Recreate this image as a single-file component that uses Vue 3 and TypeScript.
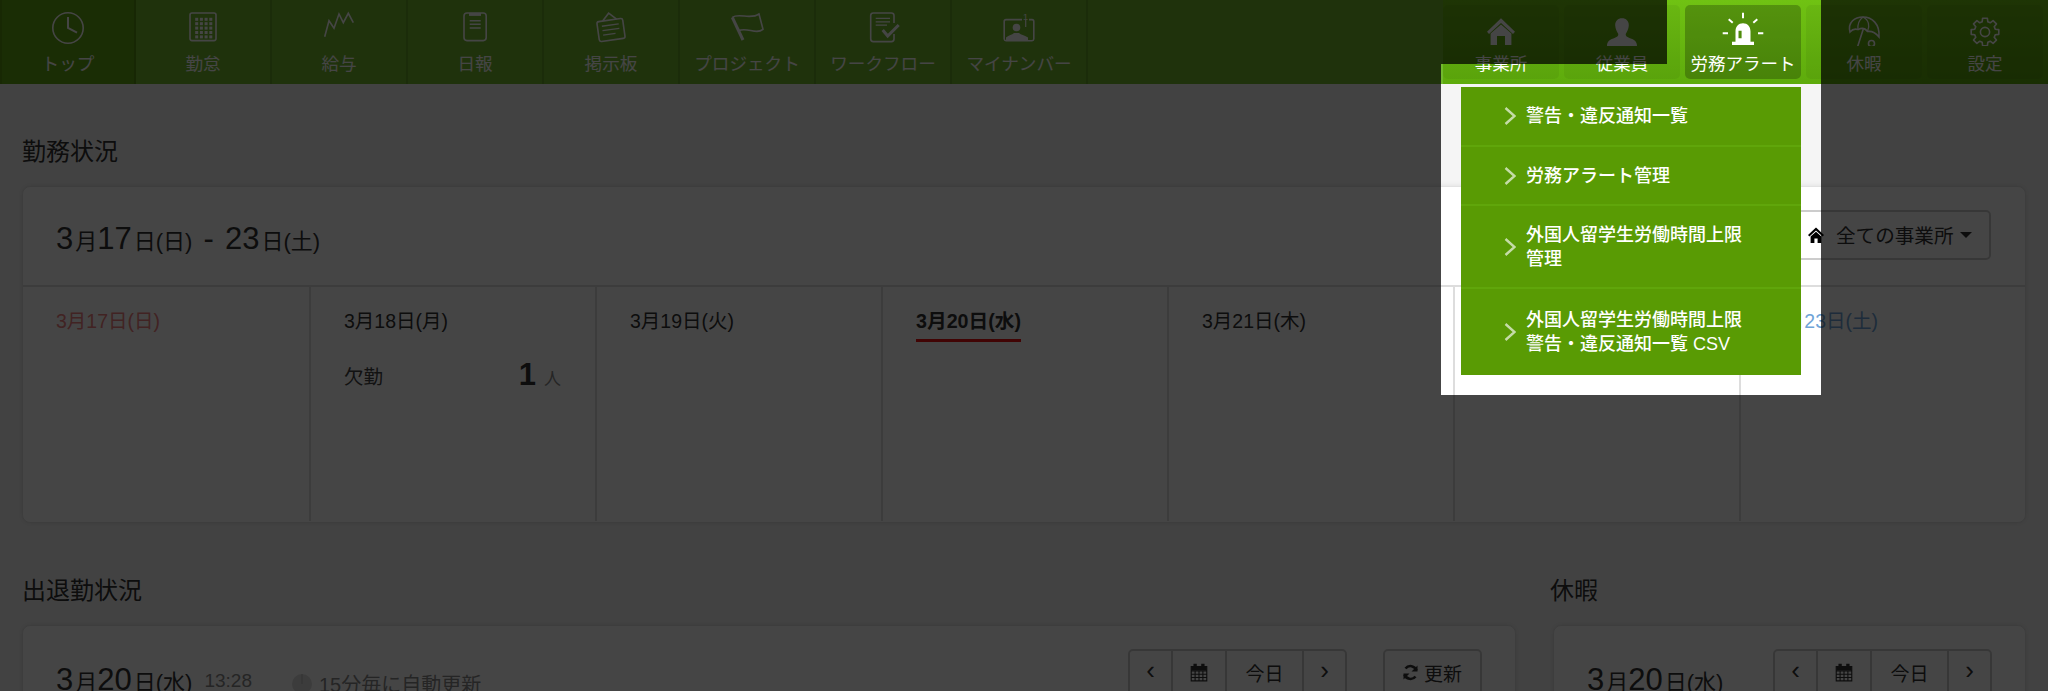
<script setup lang="ts">
interface NavItem { id: string; label: string }

const leftNav: NavItem[] = [
  { id: 'clock', label: 'トップ' },
  { id: 'grid', label: '勤怠' },
  { id: 'chart', label: '給与' },
  { id: 'report', label: '日報' },
  { id: 'board', label: '掲示板' },
  { id: 'flag', label: 'プロジェクト' },
  { id: 'flow', label: 'ワークフロー' },
  { id: 'mynumber', label: 'マイナンバー' },
]
const rightNav: NavItem[] = [
  { id: 'home', label: '事業所' },
  { id: 'user', label: '従業員' },
  { id: 'alarm', label: '労務アラート' },
  { id: 'umbrella', label: '休暇' },
  { id: 'gear', label: '設定' },
]
const menu: string[][] = [
  ['警告・違反通知一覧'],
  ['労務アラート管理'],
  ['外国人留学生労働時間上限', '管理'],
  ['外国人留学生労働時間上限', '警告・違反通知一覧 CSV'],
]
const days = [
  { label: '3月17日(日)', kind: 'sun' },
  { label: '3月18日(月)', kind: '', absent: 1 },
  { label: '3月19日(火)', kind: '' },
  { label: '3月20日(水)', kind: 'today' },
  { label: '3月21日(木)', kind: '' },
  { label: '3月22日(金)', kind: '' },
  { label: '3月23日(土)', kind: 'sat' },
]
const gridCells: { x: number; y: number }[] = []
for (let r = 0; r < 5; r++) for (let c = 0; c < 4; c++) gridCells.push({ x: 14.2 + c * 4.7, y: 7.8 + r * 4.4 })

function gearPath(): string {
  const cx = 22, cy = 22, n = 8, ro = 14, ri = 10.6
  const pts: string[] = []
  for (let i = 0; i < n; i++) {
    const a = (i * 2 * Math.PI) / n
    const steps: [number, number][] = [[-0.27, ri], [-0.17, ro], [0.17, ro], [0.27, ri]]
    for (const [d, r] of steps) {
      const t = a + d
      pts.push(`${(cx + r * Math.sin(t)).toFixed(2)} ${(cy - r * Math.cos(t)).toFixed(2)}`)
    }
  }
  return 'M' + pts.join('L') + 'Z'
}
const gear = gearPath()
</script>

<template>
  <div class="page">
    <header class="nav">
      <div class="nav-left">
        <a v-for="(n, i) in leftNav" :key="n.id" class="tab" :class="{ current: i === 0 }">
          <svg class="ico" viewBox="0 0 44 36">
            <g v-if="n.id === 'clock'" fill="none" stroke="#fff" stroke-width="1.6">
              <circle cx="22" cy="18" r="15.2" />
              <path d="M22 7V18L31 22.6" stroke-width="2" />
            </g>
            <g v-else-if="n.id === 'grid'">
              <rect x="9" y="3" width="26" height="27.6" rx="2" fill="none" stroke="#fff" stroke-width="1.6" />
              <rect v-for="(c, k) in gridCells" :key="k" :x="c.x" :y="c.y" width="3" height="3" fill="#fff" />
            </g>
            <path v-else-if="n.id === 'chart'" d="M7.7 26.7L12 10.7 17 18.3 22 4 26.3 12.7 31.3 3.3 36.3 12.7" fill="none" stroke="#fff" stroke-width="1.6" />
            <g v-else-if="n.id === 'report'" fill="none" stroke="#fff" stroke-width="1.6">
              <rect x="11" y="3" width="22.2" height="27.6" rx="3" />
              <path d="M16 4.4H28" stroke-width="3" />
              <path d="M16.7 10.7H27.7M16.7 14.2H27.7M16.7 18H27.7" />
            </g>
            <g v-else-if="n.id === 'board'" fill="none" stroke="#fff" stroke-width="1.6" transform="rotate(-8 22 20)">
              <rect x="9" y="10" width="26" height="20" rx="2" />
              <path d="M15 10L22 3 29 10" />
              <path d="M13.5 15H30.5M13.5 19.5H30.5M13.5 24H26" stroke-width="1.3" />
            </g>
            <g v-else-if="n.id === 'flag'" fill="none" stroke="#fff" stroke-width="1.6">
              <path d="M7.3 7.3L18 30" stroke-width="3" />
              <path d="M7.3 7.3C14 2.7 25.7 10 34 4L38 19.3C30.7 25 22.3 16.7 13.3 20.7" />
            </g>
            <g v-else-if="n.id === 'flow'" fill="none" stroke="#fff" stroke-width="1.6">
              <path d="M33 13V5.5A2.6 2.6 0 0 0 30.4 3H12.3A2.6 2.6 0 0 0 9.7 5.5V29A2.6 2.6 0 0 0 12.3 31.6H30.4A2.6 2.6 0 0 0 33 29V24" />
              <path d="M14.7 8.3H29M14.7 11.8H29M14.7 15.2H26" stroke-width="1.3" />
              <path d="M21.7 20L26.7 26 37.7 15" stroke-width="3" />
            </g>
            <g v-else-if="n.id === 'mynumber'">
              <path d="M25 9.6H9A1.8 1.8 0 0 0 7.2 11.4V29A1.8 1.8 0 0 0 9 30.7H35A1.8 1.8 0 0 0 36.8 29V11.4A1.8 1.8 0 0 0 35 9.6H32" fill="none" stroke="#fff" stroke-width="1.6" />
              <circle cx="19.5" cy="17.5" r="3.8" fill="#fff" />
              <path d="M9 30V27.5C12 25 15 25 17 23H22C24 25 27 25 31 27.5V30Z" fill="#fff" />
              <text x="28.4" y="10" fill="#fff" font-size="9" text-anchor="middle" class="one">1</text>
              <path d="M28.7 10V17" stroke="#fff" stroke-width="1.2" />
            </g>
          </svg>
          <span class="tab-label">{{ n.label }}</span>
        </a>
      </div>
      <div class="nav-right">
        <a v-for="n in rightNav" :key="n.id" class="pill" :class="{ open: n.id === 'alarm' }">
          <svg class="ico" viewBox="0 0 44 36">
            <g v-if="n.id === 'home'" fill="#fff">
              <path d="M22 8.3L8 21.8 10 24 22 13 34 24 36 21.8Z" />
              <path d="M11.6 23.5L22 14.6 32.4 23.5V35H26V26H18V35H11.6Z" />
            </g>
            <g v-else-if="n.id === 'user'" fill="#fff">
              <path d="M22 8.3C26 8.3 29 11 28.8 15.5 28.6 19 27 22 25.7 24 25.4 26 27 27 30 28.2 34 29.6 37 31 37 36H7C7 31 10 29.6 14 28.2 17 27 18.6 26 18.3 24 17 22 15.4 19 15.2 15.5 15 11 18 8.3 22 8.3Z" />
            </g>
            <g v-else-if="n.id === 'alarm'" fill="#fff">
              <path d="M11 31.7H33V35H11Z" />
              <path fill-rule="evenodd" d="M14.5 32V21.5C14.5 16.5 17.5 13.3 22 13.3 26.5 13.3 29.5 16.5 29.5 21.5V32ZM17.5 20.7V28.3H20.6V20.7Z" />
              <path d="M22 2.7V8.3M7.7 9.3L11.7 12.7M36.3 9.3L32.3 12.7M1.7 23.3H7M37 23.3H42.3" stroke="#fff" stroke-width="2" fill="none" />
            </g>
            <g v-else-if="n.id === 'umbrella'" fill="none" stroke="#fff" stroke-width="1.6">
              <path d="M8 22C5.5 12 13 7 21 7 30 7 38 14 37 27 33 22 29 21 25.5 21.5 23 18 19 18 16 19.6 13 18.6 10 19.6 8 22Z" />
              <path d="M21 7C17 10 15.5 15 16 19.6M21 7C27 10 28 16 25.5 21.5" stroke-width="1.3" />
              <path d="M21.3 19L15.5 37M7 37.5H37.5" />
              <circle cx="29.5" cy="33.5" r="3" />
            </g>
            <g v-else-if="n.id === 'gear'" fill="none" stroke="#fff" stroke-width="1.6">
              <path :d="gear" stroke-linejoin="round" />
              <circle cx="22" cy="22" r="4.6" />
            </g>
          </svg>
          <span class="tab-label right-label">{{ n.label }}</span>
          <ul v-if="n.id === 'alarm'" class="dropdown">
            <li v-for="(m, i) in menu" :key="i" class="drop-row" :class="'row' + i">
              <svg class="chev" viewBox="0 0 12 18"><path d="M1.5 1L10.5 9 1.5 17" fill="none" stroke="#fff" stroke-width="2.4" /></svg>
              <span class="drop-text"><span v-for="l in m" :key="l" class="drop-line">{{ l }}</span></span>
            </li>
          </ul>
        </a>
      </div>
    </header>

    <main class="content">
      <h2 class="sec-title">勤務状況</h2>
      <section class="card week">
        <div class="week-head">
          <div class="bigdate head-date"><b>3</b>月<b>17</b>日(日) <b class="dash">-</b> <b>23</b>日(土)</div>
          <button class="btn office">
            <svg width="16" height="16" viewBox="0 0 16 16"><path d="M8 0.5L0 8 1.4 9.4 8 3.4 14.6 9.4 16 8ZM2.6 9.6L8 4.8 13.4 9.6V16H9.6V11.5H6.4V16H2.6Z" fill="#000" /></svg>
            <span>全ての事業所</span>
            <i class="caret"></i>
          </button>
        </div>
        <div class="week-grid">
          <div v-for="d in days" :key="d.label" class="day">
            <span class="day-label" :class="d.kind">{{ d.label }}</span>
            <div v-if="d.absent" class="absent">
              <span>欠勤</span>
              <span class="count"><b>{{ d.absent }}</b><small>人</small></span>
            </div>
          </div>
        </div>
      </section>

      <div class="lower">
        <div>
          <h2 class="sec-title second">出退勤状況</h2>
          <section class="card low-card">
            <div class="bigdate"><b>3</b>月<b>20</b>日(水)</div>
            <span class="time">13:28</span>
            <span class="auto"><svg width="20" height="20" viewBox="0 0 20 20"><circle cx="10" cy="10" r="10" fill="#ddd" /><path d="M10 0V10" stroke="#bbb" /></svg>15分毎に自動更新</span>
            <div class="seg push">
              <span class="s1">‹</span>
              <span class="s2"><svg width="18" height="20" viewBox="0 0 16 18"><path d="M1 4H15V17H1Z M1 8H15M1 11H15M1 14H15M4.5 8V17M8 8V17M11.5 8V17" fill="none" stroke="#333" /><path d="M3 1.5H6V6H3ZM10 1.5H13V6H10ZM1 3.5H15V7.5H1Z" fill="#333" /></svg></span>
              <span class="s3">今日</span>
              <span class="s4">›</span>
            </div>
            <button class="btn refresh">
              <svg width="17" height="17" viewBox="0 0 17 17"><path d="M14.5 6.5A6.3 6.3 0 0 0 3.5 4.5M2.5 10.5A6.3 6.3 0 0 0 13.5 12.5" fill="none" stroke="#333" stroke-width="2.6" /><path d="M15.5 1.5V7.5H9.5ZM1.5 15.5V9.5H7.5Z" fill="#333" /></svg>
              <span>更新</span>
            </button>
          </section>
        </div>
        <div>
          <h2 class="sec-title second vac-title">休暇</h2>
          <section class="card low-card">
            <div class="bigdate"><b>3</b>月<b>20</b>日(水)</div>
            <div class="seg push">
              <span class="s1">‹</span>
              <span class="s2"><svg width="18" height="20" viewBox="0 0 16 18"><path d="M1 4H15V17H1Z M1 8H15M1 11H15M1 14H15M4.5 8V17M8 8V17M11.5 8V17" fill="none" stroke="#333" /><path d="M3 1.5H6V6H3ZM10 1.5H13V6H10ZM1 3.5H15V7.5H1Z" fill="#333" /></svg></span>
              <span class="s3">今日</span>
              <span class="s4">›</span>
            </div>
          </section>
        </div>
      </div>
    </main>

    <div class="shade" aria-hidden="true"></div>
  </div>
</template>

<style>
html, body { margin: 0; background: #f5f5f5; overflow: hidden; }
</style>

<style scoped>
* { box-sizing: border-box; }
.page {
  position: relative;
  width: 2048px;
  height: 691px;
  overflow: hidden;
  background: #f5f5f5;
  color: #333;
  font-family: "Liberation Sans", "Noto Sans CJK JP", sans-serif;
}
.shade {
  position: absolute;
  inset: 0;
  background: rgba(0, 0, 0, 0.73);
  clip-path: polygon(evenodd, 0 0, 2048px 0, 2048px 691px, 0 691px, 0 0, 1667px 0, 1667px 64px, 1441px 64px, 1441px 395px, 1821px 395px, 1821px 0, 1667px 0, 0 0);
}

/* nav */
.nav {
  display: flex;
  height: 84px;
  background: linear-gradient(#70c213, #5eab0c);
}
.nav-left { display: flex; flex: 1; background: #72b92e; }
.tab {
  width: 136px;
  height: 84px;
  padding-top: 10px;
  display: flex;
  flex-direction: column;
  align-items: center;
  border-right: 2px solid rgba(0, 0, 0, 0.12);
  color: #fff;
}
.tab:first-child { background: #62a515; border-left: 2px solid rgba(0, 0, 0, 0.1); }
.ico { width: 44px; height: 36px; display: block; flex: none; }
.one { font-family: "Liberation Sans", sans-serif; }
.tab-label { font-size: 17.6px; line-height: 24px; margin-top: 6px; white-space: nowrap; }
.right-label { font-size: 17.5px; }
.nav-right { display: flex; gap: 5px; padding: 5px 5px 5px 0; }
.pill {
  position: relative;
  width: 116px;
  padding-top: 5px;
  display: flex;
  flex-direction: column;
  align-items: center;
  border-radius: 5px;
  background: rgba(0, 0, 0, 0.05);
  color: #fff;
}
.pill.open { background: rgba(0, 0, 0, 0.24); }

/* dropdown */
.dropdown {
  position: absolute;
  top: 82px;
  right: 0;
  width: 340px;
  margin: 0;
  padding: 0;
  list-style: none;
  background: #599b04;
}
.drop-row {
  display: flex;
  align-items: center;
  gap: 10px;
  padding-left: 43px;
  height: 60px;
  border-bottom: 2px solid #60a60b;
}
.row1 { height: 59px; }
.row2 { height: 83px; padding-top: 1px; }
.row3 { height: 86px; border-bottom: 0; }
.chev { width: 12px; height: 18px; flex: none; opacity: 0.65; }
.drop-text { display: flex; flex-direction: column; font-size: 18px; line-height: 24px; font-weight: 500; }
.drop-line { display: block; white-space: nowrap; }

/* content */
.content { padding: 51px 22px 0; }
.sec-title { margin: 0 0 17px; font-size: 24px; line-height: 34px; font-weight: 400; color: #333; }
.sec-title.second { margin: 0 0 17px; }
.sec-title.vac-title { margin-left: -3px; }
.card {
  background: #fff;
  border: 1px solid #e2e2e2;
  border-radius: 8px;
  box-shadow: 0 0 6px rgba(0, 0, 0, 0.1);
}
.week { height: 337px; }
.week-head {
  height: 100px;
  padding: 0 34px 0 33px;
  display: flex;
  align-items: center;
  justify-content: space-between;
  border-bottom: 2px solid #ddd;
}
.bigdate { font-size: 22px; line-height: 40px; white-space: nowrap; color: #333; }
.bigdate b { font-size: 31px; font-weight: 400; margin-right: 2px; }
.bigdate .dash { margin: 0 5px; }
.head-date { padding-top: 8px; }
.btn {
  display: inline-flex;
  align-items: center;
  font: inherit;
  background: #fff;
  border: 2px solid #ccc;
  border-radius: 5px;
  color: #333;
}
.office {
  width: 202px;
  height: 50px;
  margin-top: -3px;
  padding: 0 0 0 17px;
  font-size: 19.6px;
  gap: 12px;
}
.caret {
  width: 0;
  height: 0;
  margin-left: -6px;
  border-left: 6px solid transparent;
  border-right: 6px solid transparent;
  border-top: 6px solid #333;
}
.week-grid { display: grid; grid-template-columns: repeat(7, 286px); height: 234px; }
.day { border-left: 2px solid #ddd; padding: 22px 34px 0 33px; }
.day:first-child { border-left: 0; }
.day-label { display: inline-block; font-size: 19.5px; line-height: 24px; padding-bottom: 6px; color: #333; }
.day-label.sun { color: #f08080; }
.day-label.sat { color: #6fa4d8; }
.day-label.today { font-weight: 700; font-size: 19.7px; border-bottom: 3px solid #f01212; }
.absent { display: flex; justify-content: space-between; align-items: center; margin-top: 18px; font-size: 19.5px; }
.absent span:first-child { color: #444; }
.count b { font-size: 31px; }
.count small { font-size: 17px; margin-left: 8px; color: #888; }

.lower { display: grid; grid-template-columns: 1494px 473px; column-gap: 37px; margin-top: 51px; }
.low-card { height: 200px; padding: 23px 33px 0; display: flex; align-items: flex-start; }
.low-card .bigdate { margin-top: 11px; }
.time { margin: 21px 0 0 12px; font-size: 19px; color: #888; }
.auto { margin: 20px 0 0 40px; display: flex; align-items: center; gap: 7px; font-size: 20px; color: #888; }
.seg {
  display: grid;
  grid-template-columns: 43px 54px 77px 41px;
  height: 46px;
  font-size: 19px;
  border: 2px solid #ccc;
  border-radius: 5px;
  background: #fff;
}
.seg.push { margin-left: auto; }
.seg span { display: flex; align-items: center; justify-content: center; border-right: 2px solid #ccc; }
.seg span:last-child { border-right: 0; }
.s1, .s4 { font-size: 26px; padding-bottom: 4px; }
.refresh { width: 99px; height: 46px; margin-left: 36px; padding: 0 0 0 17px; gap: 5px; font-size: 19px; }
</style>
